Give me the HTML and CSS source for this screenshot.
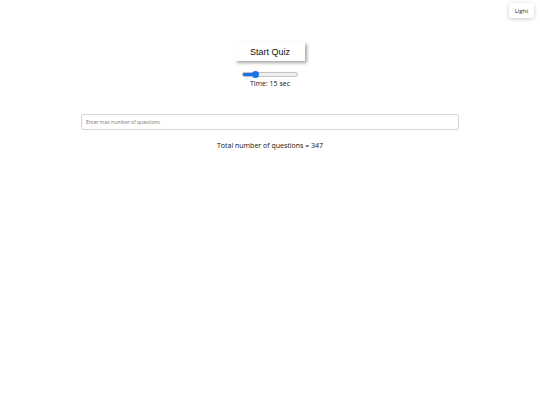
FILE: index.html
```html
<!DOCTYPE html>
<html>
<head>
<meta charset="utf-8">
<link rel="stylesheet" href="styles.css">
</head>
<body>
<button class="theme">Light</button>
<main class="main">
  <button class="start">Start Quiz</button>
  <div class="timer">
    <input class="range" type="range" min="5" max="60" value="15">
    <div class="time">Time: 15 sec</div>
  </div>
  <input class="count" type="text" placeholder="Enter max number of questions">
  <div class="total">Total number of questions = 347</div>
</main>
</body>
</html>
```
FILE: styles.css
```css
html, body { margin: 0; padding: 0; background: #fff; }
body { font-family: "Open Sans", "Noto Sans", sans-serif; color: #111; position: relative; min-height: 405px; }
.theme {
  position: absolute; top: 3px; right: 6px;
  width: 25px; height: 15px; padding: 0;
  border: none; border-radius: 3px; background: #fff;
  font-family: "Open Sans", sans-serif; font-size: 6px; color: #333;
  box-shadow: 0 1px 4px rgba(0,0,0,0.22);
}
.main { display: flex; flex-direction: column; align-items: center; padding-top: 42px; }
.start {
  width: 70px; height: 19px; padding: 0; border: none; background: #fff;
  font-family: "Liberation Sans", Arial, sans-serif; font-size: 9px; color: #111;
  box-shadow: 2px 2px 3px rgba(0,0,0,0.35);
}
.timer { display: flex; flex-direction: column; align-items: center; margin-top: 11px; }
.range {
  -webkit-appearance: none; appearance: none; margin: 0;
  width: 54px; height: 3px; border-radius: 2px; border: 0.5px solid #c4c4c4;
  background: linear-gradient(to right, #1a73e8 0 22%, #efefef 22% 100%);
}
.range::-webkit-slider-thumb {
  -webkit-appearance: none; appearance: none;
  width: 7px; height: 7px; border-radius: 50%; background: #1a73e8; border: none;
}
.time { font-size: 7px; margin-top: 2px; line-height: 10px; }
.count {
  box-sizing: border-box; width: 378px; height: 16px; margin-top: 25px;
  border: 1px solid #d4d4d4; border-radius: 2px; padding: 0 4px;
  font-family: "Open Sans", sans-serif; font-size: 5px; color: #333;
}
.count::placeholder { color: #777; }
.total { font-size: 7px; margin-top: 11px; line-height: 10px; }
```
